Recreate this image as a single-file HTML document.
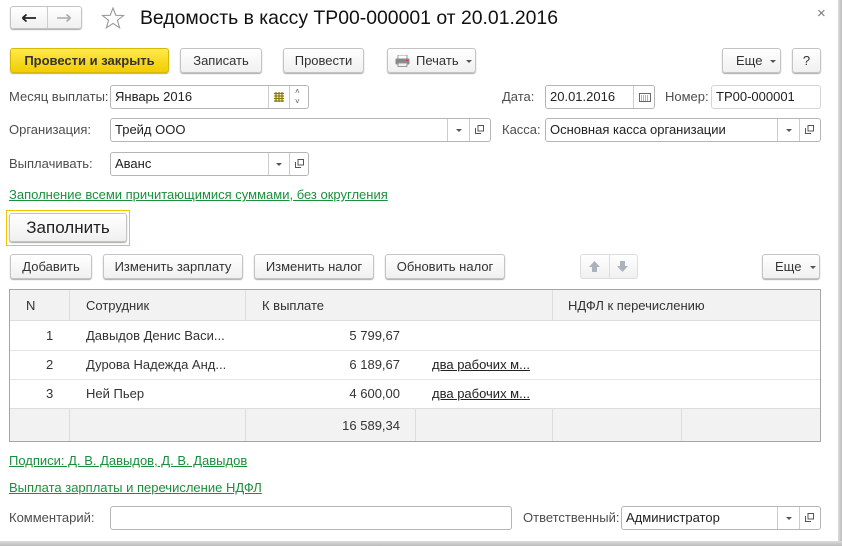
<!DOCTYPE html>
<html><head><meta charset="utf-8"><style>
*{box-sizing:border-box;margin:0;padding:0}
body{width:842px;height:546px;background:#fff;font-family:"Liberation Sans",Arial,sans-serif;font-size:13px;color:#333;position:relative;overflow:hidden}
.a{position:absolute}
.btn{position:absolute;height:25px;border:1px solid #c4c4c4;border-radius:3px;background:linear-gradient(#fff,#f0f0f0);box-shadow:0 1px 1px #aaa;text-align:center;line-height:23px;color:#333;font-size:13px;white-space:nowrap}
.fld{position:absolute;height:24px;border:1px solid #b5b5b5;border-radius:3px;background:#fff;line-height:22px;padding-left:4px;color:#222;font-size:13px;white-space:nowrap}
.lbl{position:absolute;color:#4d4d4d;font-size:13px;line-height:16px}
.sep{position:absolute;top:0;bottom:0;border-left:1px solid #ccc}
.dd{position:absolute;top:8px;width:0;height:0;border-left:3px solid transparent;border-right:3px solid transparent;border-top:3px solid #555}
.op{position:absolute;top:6px;width:9px;height:9px}
.lnk{position:absolute;color:#1a8f3c;text-decoration:underline;font-size:13px}
.tbl{position:absolute;left:9px;top:289px;width:812px;height:153px;border:1px solid #a5a5a5}
.td{position:absolute;font-size:13px;color:#333;white-space:nowrap}
</style></head><body>
<div class="a" style="right:0;top:0;width:4px;height:546px;background:linear-gradient(90deg,#ddd,#bbb)"></div>
<div class="a" style="left:0;bottom:0;width:842px;height:5px;background:linear-gradient(#ddd,#bbb)"></div>

<div class="btn" style="left:10px;top:6px;width:72px;height:23px"><span class="sep" style="left:36px"></span>
<svg class="a" style="left:10px;top:6px" width="16" height="10"><path d="M1.5 5H15M1.5 5L5.5 1.5M1.5 5L5.5 8.5" stroke="#222" stroke-width="1.8" fill="none"/></svg>
<svg class="a" style="left:45px;top:6px" width="16" height="10"><path d="M1 5H14.5M14.5 5L10.5 1.5M14.5 5L10.5 8.5" stroke="#aaa" stroke-width="1.6" fill="none"/></svg></div>
<svg class="a" style="left:101px;top:7px" width="24" height="22"><path d="M12 1L14.8 8.3 22.5 8.5 16.4 13.3 18.6 20.8 12 16.4 5.4 20.8 7.6 13.3 1.5 8.5 9.2 8.3Z" fill="none" stroke="#999" stroke-width="1.1"/></svg>
<div class="a" style="left:140px;top:7px;font-size:19.4px;color:#111">Ведомость в кассу ТР00-000001 от 20.01.2016</div>
<div class="a" style="left:817px;top:5px;font-size:15px;color:#777">×</div>

<div class="btn" style="left:10px;top:48px;width:159px;background:linear-gradient(#ffe94d,#f2cd00);border-color:#d8b800;font-weight:bold;color:#333">Провести и закрыть</div>
<div class="btn" style="left:180px;top:48px;width:82px">Записать</div>
<div class="btn" style="left:283px;top:48px;width:81px">Провести</div>
<div class="btn" style="left:387px;top:48px;width:89px;text-align:left;padding-left:28px">Печать<span class="dd" style="left:78px;top:11px"></span>
<svg class="a" style="left:7px;top:6px" width="15" height="12"><rect x="3" y="0" width="9" height="4" fill="#fff" stroke="#999"/><rect x="0.5" y="3.5" width="14" height="6" rx="1" fill="#888"/><rect x="3" y="8" width="9" height="3.5" fill="#eee" stroke="#999"/><rect x="11" y="5" width="2" height="1" fill="#e33"/></svg></div>
<div class="btn" style="left:722px;top:48px;width:59px;text-align:left;padding-left:13px">Еще<span class="dd" style="left:47px;top:11px"></span></div>
<div class="btn" style="left:792px;top:48px;width:29px">?</div>

<div class="lbl" style="left:9px;top:89px">Месяц выплаты:</div>
<div class="fld" style="left:110px;top:85px;width:199px">Январь 2016<span class="sep" style="left:157px"></span><span class="sep" style="left:178px"></span>
<svg class="a" style="left:163px;top:6px" width="10" height="10"><path d="M0 1.5H10M0 4H10M0 6.5H10M0 9H10M2 0V10M5 0V10M8 0V10" stroke="#8a7a00" stroke-width="1.2"/></svg>
<span class="a" style="left:184px;top:-5px;font-size:8px;color:#555">˄</span><span class="a" style="left:184px;top:5px;font-size:8px;color:#555">˅</span></div>

<div class="lbl" style="left:502px;top:89px">Дата:</div>
<div class="fld" style="left:545px;top:85px;width:110px">20.01.2016<span class="sep" style="left:87px"></span>
<svg class="a" style="left:93px;top:7px" width="12" height="9"><rect x="0.5" y="0.5" width="11" height="8" fill="none" stroke="#666"/><path d="M2 3H10M2 5H10M2 7H10" stroke="#666" stroke-dasharray="1 1"/></svg></div>
<div class="lbl" style="left:665px;top:89px">Номер:</div>
<div class="fld" style="left:711px;top:85px;width:110px;border-color:#d5d5d5">ТР00-000001</div>

<div class="lbl" style="left:9px;top:122px">Организация:</div>
<div class="fld" style="left:110px;top:118px;width:381px">Трейд ООО<span class="sep" style="left:336px"></span><span class="sep" style="left:358px"></span><span class="dd" style="left:345px;top:10px"></span>
<svg class="op" style="left:364px" viewBox="0 0 9 9"><path d="M3 .5H8.5V6H3ZM.5 3V8.5H6" fill="none" stroke="#555"/></svg></div>
<div class="lbl" style="left:502px;top:122px">Касса:</div>
<div class="fld" style="left:545px;top:118px;width:276px">Основная касса организации<span class="sep" style="left:231px"></span><span class="sep" style="left:253px"></span><span class="dd" style="left:240px;top:10px"></span>
<svg class="op" style="left:259px" viewBox="0 0 9 9"><path d="M3 .5H8.5V6H3ZM.5 3V8.5H6" fill="none" stroke="#555"/></svg></div>

<div class="lbl" style="left:9px;top:156px">Выплачивать:</div>
<div class="fld" style="left:110px;top:152px;width:199px">Аванс<span class="sep" style="left:157px"></span><span class="sep" style="left:178px"></span><span class="dd" style="left:165px;top:10px"></span>
<svg class="op" style="left:184px" viewBox="0 0 9 9"><path d="M3 .5H8.5V6H3ZM.5 3V8.5H6" fill="none" stroke="#555"/></svg></div>

<div class="lnk" style="left:9px;top:187px">Заполнение всеми причитающимися суммами, без округления</div>

<div class="a" style="left:6px;top:210px;width:124px;height:36px;border:1px solid #f3c400"></div>
<div class="btn" style="left:9px;top:213px;width:118px;height:29px;line-height:27px;font-size:17px;color:#222">Заполнить</div>

<div class="btn" style="left:10px;top:254px;width:82px">Добавить</div>
<div class="btn" style="left:103px;top:254px;width:140px">Изменить зарплату</div>
<div class="btn" style="left:254px;top:254px;width:120px">Изменить налог</div>
<div class="btn" style="left:385px;top:254px;width:120px">Обновить налог</div>
<div class="btn" style="left:580px;top:254px;width:58px;box-shadow:none;border-color:#ddd"><span class="sep" style="left:28px;border-color:#ddd"></span>
<svg class="a" style="left:7px;top:5px" width="13" height="13"><path d="M6.5 1L12 7H9V12H4V7H1Z" fill="#aab3bb"/></svg>
<svg class="a" style="left:35px;top:5px" width="13" height="13"><path d="M6.5 12L12 6H9V1H4V6H1Z" fill="#aab3bb"/></svg></div>
<div class="btn" style="left:762px;top:254px;width:58px;text-align:left;padding-left:12px">Еще<span class="dd" style="left:47px;top:11px"></span></div>

<div class="tbl">
<div class="a" style="left:0;top:0;width:810px;height:31px;background:#f2f2f2;border-bottom:1px solid #ddd"></div>
<div class="a" style="left:0;top:118px;width:810px;height:33px;background:#f2f2f2;border-top:1px solid #ddd"></div>
<div class="a" style="left:0;top:60px;width:810px;border-top:1px solid #e5e5e5"></div>
<div class="a" style="left:0;top:89px;width:810px;border-top:1px solid #e5e5e5"></div>
<div class="a" style="left:59px;top:0;height:31px;border-left:1px solid #ddd"></div>
<div class="a" style="left:235px;top:0;height:31px;border-left:1px solid #ddd"></div>
<div class="a" style="left:542px;top:0;height:31px;border-left:1px solid #ddd"></div>
<div class="a" style="left:59px;top:118px;height:33px;border-left:1px solid #ddd"></div>
<div class="a" style="left:235px;top:118px;height:33px;border-left:1px solid #ddd"></div>
<div class="a" style="left:405px;top:118px;height:33px;border-left:1px solid #ddd"></div>
<div class="a" style="left:542px;top:118px;height:33px;border-left:1px solid #ddd"></div>
<div class="a" style="left:671px;top:118px;height:33px;border-left:1px solid #ddd"></div>
<div class="td" style="left:16px;top:8px">N</div>
<div class="td" style="left:76px;top:8px">Сотрудник</div>
<div class="td" style="left:252px;top:8px">К выплате</div>
<div class="td" style="left:558px;top:8px">НДФЛ к перечислению</div>
<div class="td" style="left:36px;top:38px">1</div><div class="td" style="left:76px;top:38px">Давыдов Денис Васи...</div><div class="td" style="left:320px;top:38px;width:70px;text-align:right">5 799,67</div>
<div class="td" style="left:36px;top:67px">2</div><div class="td" style="left:76px;top:67px">Дурова Надежда Анд...</div><div class="td" style="left:320px;top:67px;width:70px;text-align:right">6 189,67</div><div class="td" style="left:422px;top:67px;text-decoration:underline;color:#222">два рабочих м...</div>
<div class="td" style="left:36px;top:96px">3</div><div class="td" style="left:76px;top:96px">Ней Пьер</div><div class="td" style="left:320px;top:96px;width:70px;text-align:right">4 600,00</div><div class="td" style="left:422px;top:96px;text-decoration:underline;color:#222">два рабочих м...</div>
<div class="td" style="left:310px;top:128px;width:80px;text-align:right">16 589,34</div>
</div>

<div class="lnk" style="left:9px;top:453px">Подписи: Д. В. Давыдов, Д. В. Давыдов</div>
<div class="lnk" style="left:9px;top:480px">Выплата зарплаты и перечисление НДФЛ</div>

<div class="lbl" style="left:9px;top:510px">Комментарий:</div>
<div class="fld" style="left:110px;top:506px;width:402px"></div>
<div class="lbl" style="left:523px;top:510px">Ответственный:</div>
<div class="fld" style="left:621px;top:506px;width:200px">Администратор<span class="sep" style="left:155px"></span><span class="sep" style="left:177px"></span><span class="dd" style="left:164px;top:10px"></span>
<svg class="op" style="left:183px" viewBox="0 0 9 9"><path d="M3 .5H8.5V6H3ZM.5 3V8.5H6" fill="none" stroke="#555"/></svg></div>
</body></html>
